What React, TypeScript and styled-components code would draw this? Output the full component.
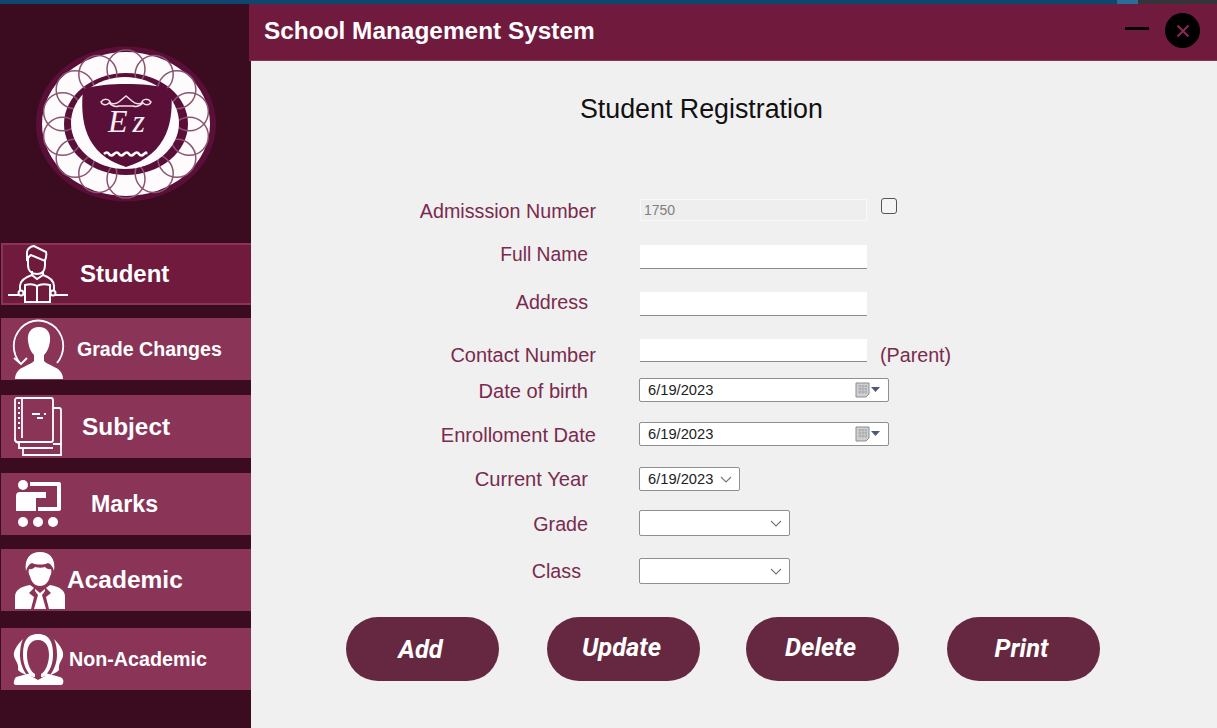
import React from 'react'
import styled, { createGlobalStyle } from 'styled-components'

const GlobalStyle = createGlobalStyle`
    html, body {
        margin: 0;
        padding: 0;
        overflow: hidden;
        background: #f0f0f0;
        font-family: "Liberation Sans", Arial, sans-serif;
    }
`

const Page = styled.div`
    width: 1217px;
    height: 728px;
    display: flex;
    flex-direction: column;
`

const TopStrip = styled.div`
    height: 4px;
    flex: none;
    background: linear-gradient(to right, #0e466e 0, #0e466e 1117px, #2a6d99 1117px, #2a6d99 1138px, #34343a 1138px);
`

const Window = styled.div`
    flex: 1;
    display: flex;
    min-height: 0;
`

const Sidebar = styled.aside`
    width: 250px;
    flex: none;
    padding-left: 1px;
    background: #3b0c20;
    display: flex;
    flex-direction: column;
`

const LogoArea = styled.div`
    height: 239px;
    display: flex;
    align-items: center;
    justify-content: center;
`

const NavItem = styled.div<{ $gap: number; $active?: boolean; $height?: number }>`
    height: ${(p) => p.$height ?? 62}px;
    margin-top: ${(p) => p.$gap}px;
    box-sizing: border-box;
    display: flex;
    align-items: center;
    color: #fff;
    background: ${(p) => (p.$active ? '#701a3e' : '#8a3558')};
    border: ${(p) => (p.$active ? '2px solid #8a3558' : 'none')};
    border-right: none;
`

const NavIcon = styled.svg<{ $left: number }>`
    margin-left: ${(p) => p.$left}px;
    flex: none;
`

const NavLabel = styled.span<{ $left: number; $size: number }>`
    margin-left: ${(p) => p.$left}px;
    font-size: ${(p) => p.$size}px;
    font-weight: bold;
    white-space: nowrap;
`

const Content = styled.div`
    flex: 1;
    min-width: 0;
    display: flex;
    flex-direction: column;
`

const Header = styled.header`
    height: 57px;
    flex: none;
    margin-left: -2px;
    padding: 0 17px 3px 15px;
    box-sizing: border-box;
    background: #701a3e;
    border-bottom: 1px solid #8a3558;
    display: flex;
    align-items: center;
    color: #fff;
`

const AppTitle = styled.div`
    font-size: 24.4px;
    font-weight: bold;
    flex: 1;
`

const MinimizeBar = styled.div`
    width: 24px;
    height: 3px;
    background: #000;
    margin: 0 16px 5px 0;
`

const CloseButton = styled.div`
    width: 35px;
    height: 35px;
    border-radius: 50%;
    background: #000;
    display: flex;
    align-items: center;
    justify-content: center;
`

const Main = styled.main`
    flex: 1;
    padding-top: 33px;
    background: #f0f0f0;
`

const PageTitle = styled.h1`
    margin: 0 0 0 329px;
    font-size: 26.8px;
    line-height: 30px;
    font-weight: normal;
    color: #111;
`

const Form = styled.form`
    margin-top: 75px;
    display: flex;
    flex-direction: column;
`

const Row = styled.div<{ $top: number; $height: number }>`
    display: grid;
    grid-template-columns: 345px auto;
    grid-template-rows: minmax(0, 1fr);
    column-gap: 43px;
    align-items: center;
    justify-content: start;
    height: ${(p) => p.$height}px;
    margin-top: ${(p) => p.$top}px;
`

const Label = styled.label<{ $inset?: number; $nudge?: number; $size?: number }>`
    text-align: right;
    font-size: ${(p) => p.$size ?? 19.7}px;
    line-height: 24px;
    color: #7a2a4e;
    padding-right: ${(p) => p.$inset ?? 0}px;
    margin-top: ${(p) => (p.$nudge ?? 0) * 2}px;
    white-space: nowrap;
`

const Controls = styled.div`
    display: flex;
    align-items: center;
    height: 100%;
`

const TextBox = styled.div<{ $disabled?: boolean }>`
    width: 227px;
    height: 100%;
    box-sizing: border-box;
    margin-left: 1px;
    padding-left: 3px;
    display: flex;
    align-items: center;
    font-size: 14px;
    color: #808080;
    background: ${(p) => (p.$disabled ? '#eeeeee' : '#fff')};
    border: ${(p) => (p.$disabled ? '1px solid #f8f8f8' : 'none')};
    border-bottom: ${(p) => (p.$disabled ? '1px solid #f8f8f8' : '1px solid #8c8c8c')};
`

const Check = styled.div`
    width: 16px;
    height: 16px;
    box-sizing: border-box;
    margin: -9px 0 0 14px;
    border: 1px solid #555;
    border-radius: 3px;
    background: #f4f4f4;
`

const Note = styled.span`
    margin: 8px 0 0 13px;
    font-size: 19.7px;
    line-height: 24px;
    color: #7a2a4e;
`

const Picker = styled.div<{ $width: number }>`
    width: ${(p) => p.$width}px;
    height: 100%;
    box-sizing: border-box;
    padding: 0 7px 0 8px;
    display: flex;
    align-items: center;
    justify-content: space-between;
    background: #fff;
    border: 1px solid #8f8f8f;
    border-radius: 2px;
    font-size: 14.7px;
    color: #222;
`

const ButtonRow = styled.div`
    margin: 33px 0 0 95px;
    display: grid;
    grid-template-columns: 201px 199px 201px 153px;
`

const ActionButton = styled.button<{ $lift?: number }>`
    width: 153px;
    height: 64px;
    padding: 0 4px ${(p) => (p.$lift ?? 0) * 2}px 0;
    border: none;
    border-radius: 32px;
    background: #652840;
    color: #fff;
    font-family: Roboto, "Liberation Sans", sans-serif;
    font-size: 25.5px;
    font-weight: bold;
    font-style: italic;
`

const Chevron = () => (
    <svg width="12" height="7" viewBox="0 0 12 7">
        <path d="M1 1l5 5 5-5" fill="none" stroke="#777" strokeWidth="1.1" />
    </svg>
)

const CalendarDrop = () => (
    <svg width="26" height="16" viewBox="0 0 26 16">
        <path d="M1 1h13v11l-3 3H1z" fill="#cfd0d2" stroke="#8b8d90" />
        <path d="M3 4h9M3 7h9M3 10h9M5 3v9M8 3v9M11 3v9" stroke="#9b9da0" strokeWidth=".7" />
        <path d="M16 5h9l-4.500 5z" fill="#48597a" />
    </svg>
)

const scallops = Array.from({ length: 14 }, (_, i) => {
    const a = (i / 14) * Math.PI * 2
    return { cx: 90 + Math.sin(a) * 65, cy: 78 - Math.cos(a) * 55 }
})

const Logo = () => (
    <svg width="180" height="156" viewBox="0 0 180 156">
        <ellipse cx="90" cy="78" rx="90" ry="77.500" fill="#5a0f38" />
        <ellipse cx="90" cy="78" rx="84" ry="72" fill="#fdfbfc" />
        <ellipse cx="90" cy="78" rx="62" ry="51" fill="#5a0f38" />
        {scallops.map((c) => (
            <circle key={c.cx + '-' + c.cy} cx={c.cx} cy={c.cy} r="19" fill="none" stroke="#8b5572" strokeWidth="1.500" />
        ))}
        <ellipse cx="89" cy="77" rx="54" ry="46" fill="#fdfbfc" />
        <path d="M47 43C62 39 74 38 90 38s29 1 45 5c3 30-2 65-45 78C48 108 44 74 47 43z" fill="#5a0f38" />
        <path
            d="M65 56c3-4 8-3 9 0s7 2 10-1l6-5 6 5c3 3 9 4 10 1s6-4 9 0c-2 4-6 3-8 1-3 3-7 4-10 3H83c-3 1-7 0-10-3-2 2-6 3-8-1z"
            fill="none"
            stroke="#f0dfe7"
            strokeWidth="1.500"
        />
        <text x="72" y="86" fontFamily="Liberation Serif, serif" fontStyle="italic" fontSize="32" letterSpacing="5" fill="#f7eef2">
            Ez
        </text>
        <path d="M68 108q3-3 5 0t5 0 5 0 5 0 5 0 5 0 5 0 5 0 2 0" fill="none" stroke="#fdfbfc" strokeWidth="2.600" />
    </svg>
)

const StudentIcon = () => (
    <NavIcon $left={5} width="60" height="60" viewBox="0 0 60 60" fill="none" stroke="#fff" strokeWidth="2">
        <path d="M0 51h11M47 51h13" />
        <path d="M17 41c4-1 9-1 12 1 3-2 9-2 13-1v17H17zM29 42v16" />
        <path d="M12 46v-4c0-6 6-9 12-11M46 46v-4c0-6-5-9-11-11" />
        <path d="M24 27v4l5 4 6-4v-4" />
        <path d="M20 14v7c0 6 4 9 9 9s8-3 8-9v-6" />
        <path d="M19 17V8c0-3 4-6 7-6l12 6c1 3 0 6-1 9l-14-6c-2 1-3 3-4 6z" />
        <circle cx="13" cy="49" r="2.500" />
        <circle cx="45" cy="49" r="2.500" />
    </NavIcon>
)

const GradeIcon = () => (
    <NavIcon $left={11} width="54" height="60" viewBox="0 0 54 60">
        <path d="M45 44C53 34 54 20 44 9 33-1 19-1 9 9-1 20 0 34 8 44" fill="none" stroke="#fff" strokeWidth="1.800" />
        <path d="M2 39l7 6 6-6" fill="none" stroke="#fff" strokeWidth="1.800" />
        <path d="M27 8c8 0 12 6 11 14-1 7-3 11-6 14v6c4 4 13 6 16 10 2 2 3 5 3 8H3c0-3 1-6 3-8 3-4 12-6 16-10v-6c-3-3-5-7-6-14C15 14 19 8 27 8z" fill="#fff" />
    </NavIcon>
)

const SubjectIcon = () => (
    <NavIcon $left={13} width="48" height="59" viewBox="0 0 48 59" fill="none" stroke="#fff" strokeWidth="1.800">
        <rect x="1" y="1" width="38" height="44" rx="2" />
        <path d="M39 11h6a2 2 0 0 1 2 2v34H39" />
        <path d="M1 41c0 3 2 5 4 5v5h34M9 51v7h38v-11" />
        <path d="M8 1v40" />
        <path d="M4 6h2M4 11h2M4 16h2M4 21h2M4 26h2M4 31h2" />
        <path d="M18 17h8M30 17h2M23 21h6" />
    </NavIcon>
)

const MarksIcon = () => (
    <NavIcon $left={15} width="46" height="48" viewBox="0 0 46 48" fill="#fff">
        <circle cx="7" cy="5" r="5" />
        <path d="M0 16a4 4 0 0 1 4-4h26v6H20v13H0z" />
        <path d="M14 2h29a2 2 0 0 1 2 2v25a2 2 0 0 1-2 2H22v-4h19V6H14z" />
        <circle cx="7" cy="42" r="5" />
        <circle cx="22" cy="42" r="5" />
        <circle cx="37" cy="42" r="5" />
    </NavIcon>
)

const AcademicIcon = () => (
    <NavIcon $left={14} width="50" height="58" viewBox="0 0 50 58" fill="#fff">
        <path d="M11 20C9 8 15 1 25 1s16 7 14 19c-1-4-3-7-6-8-5 2-11 2-16 0-3 1-5 4-6 8z" />
        <path d="M14 18c4 1 6-2 6-2 4 1 7 1 10 0 0 0 2 3 6 2 1 3 0 6-1 7-1 6-5 10-10 10s-9-4-10-10c-1-1-2-4-1-7z" />
        <path d="M0 58V46c0-7 5-10 15-12l4 3-5 5 5 4-3 12zM50 58V46c0-7-5-10-15-12l-4 3 5 5-5 4 3 12z" />
        <path d="M20 38l5 4 5-4v2l-3 4 4 14H19l4-14-3-4z" />
    </NavIcon>
)

const NonAcademicIcon = () => (
    <NavIcon $left={12} width="51" height="52" viewBox="0 0 51 52" fill="#fff">
        <path d="M25 1c12 0 15 9 15 21 0 12-6 20-10 22H20c-4-2-10-10-10-22C10 10 13 1 25 1z" />
        <path d="M25 7c8 0 11 7 11 15 0 10-5 18-8 19v5h-6v-5c-3-1-8-9-8-19 0-8 3-15 11-15z" fill="#8a3558" />
        <path d="M10 6C4 12 0 18 1 23c1 5 5 7 4 14 3 3 6 4 9 5C9 36 7 28 7 22c0-6 1-12 3-16z" />
        <path d="M41 6c6 6 10 12 9 17-1 5-5 7-4 14-3 3-6 4-9 5 5-6 7-14 7-20 0-6-1-12-3-16z" />
        <path d="M3 44l15-4v3l7 4 7-4v-3l15 4c3 1 4 4 3 6 0 1-1 2-2 2H3c-1 0-3-1-2-3 0-2 1-4 2-5z" />
    </NavIcon>
)

const App = () => {
    return (
        <Page>
            <GlobalStyle />
            <TopStrip />
            <Window>
                <Sidebar>
                    <LogoArea>
                        <Logo />
                    </LogoArea>
                    <NavItem $gap={0} $active>
                        <StudentIcon />
                        <NavLabel $left={12} $size={24}>Student</NavLabel>
                    </NavItem>
                    <NavItem $gap={13}>
                        <GradeIcon />
                        <NavLabel $left={11} $size={19.6}>Grade Changes</NavLabel>
                    </NavItem>
                    <NavItem $gap={15} $height={63}>
                        <SubjectIcon />
                        <NavLabel $left={20} $size={24.4}>Subject</NavLabel>
                    </NavItem>
                    <NavItem $gap={15}>
                        <MarksIcon />
                        <NavLabel $left={29} $size={23.2}>Marks</NavLabel>
                    </NavItem>
                    <NavItem $gap={14}>
                        <AcademicIcon />
                        <NavLabel $left={2} $size={24.500}>Academic</NavLabel>
                    </NavItem>
                    <NavItem $gap={17}>
                        <NonAcademicIcon />
                        <NavLabel $left={5} $size={19.700}>Non-Academic</NavLabel>
                    </NavItem>
                </Sidebar>
                <Content>
                    <Header>
                        <AppTitle>School Management System</AppTitle>
                        <MinimizeBar />
                        <CloseButton>
                            <svg width="14" height="14" viewBox="0 0 14 14">
                                <path d="M1.500 1.500l11 11M12.500 1.500l-11 11" stroke="#8a2a55" strokeWidth="2" />
                            </svg>
                        </CloseButton>
                    </Header>
                    <Main>
                        <PageTitle>Student Registration</PageTitle>
                        <Form>
                            <Row $top={0} $height={22}>
                                <Label $nudge={1}>Admisssion Number</Label>
                                <Controls>
                                    <TextBox $disabled>1750</TextBox>
                                    <Check />
                                </Controls>
                            </Row>
                            <Row $top={24} $height={24}>
                                <Label $inset={8} $nudge={-2.5} $size={19.3}>Full Name</Label>
                                <Controls>
                                    <TextBox />
                                </Controls>
                            </Row>
                            <Row $top={23} $height={24}>
                                <Label $inset={8} $nudge={-2}>Address</Label>
                                <Controls>
                                    <TextBox />
                                </Controls>
                            </Row>
                            <Row $top={23} $height={23}>
                                <Label $nudge={4} $size={20}>Contact Number</Label>
                                <Controls>
                                    <TextBox />
                                    <Note>(Parent)</Note>
                                </Controls>
                            </Row>
                            <Row $top={16} $height={24}>
                                <Label $inset={8} $nudge={1} $size={20.1}>Date of birth</Label>
                                <Controls>
                                    <Picker $width={250}>
                                        6/19/2023
                                        <CalendarDrop />
                                    </Picker>
                                </Controls>
                            </Row>
                            <Row $top={20} $height={24}>
                                <Label $nudge={1} $size={20.1}>Enrolloment Date</Label>
                                <Controls>
                                    <Picker $width={250}>
                                        6/19/2023
                                        <CalendarDrop />
                                    </Picker>
                                </Controls>
                            </Row>
                            <Row $top={21} $height={24}>
                                <Label $inset={8} $size={20.2}>Current Year</Label>
                                <Controls>
                                    <Picker $width={101}>
                                        6/19/2023
                                        <Chevron />
                                    </Picker>
                                </Controls>
                            </Row>
                            <Row $top={19} $height={26}>
                                <Label $inset={8} $nudge={0.5}>Grade</Label>
                                <Controls>
                                    <Picker $width={151}>
                                        <span />
                                        <Chevron />
                                    </Picker>
                                </Controls>
                            </Row>
                            <Row $top={22} $height={26}>
                                <Label $inset={15}>Class</Label>
                                <Controls>
                                    <Picker $width={151}>
                                        <span />
                                        <Chevron />
                                    </Picker>
                                </Controls>
                            </Row>
                        </Form>
                        <ButtonRow>
                            <ActionButton>Add</ActionButton>
                            <ActionButton $lift={2}>Update</ActionButton>
                            <ActionButton $lift={2}>Delete</ActionButton>
                            <ActionButton $lift={1}>Print</ActionButton>
                        </ButtonRow>
                    </Main>
                </Content>
            </Window>
        </Page>
    )
}

export default App
